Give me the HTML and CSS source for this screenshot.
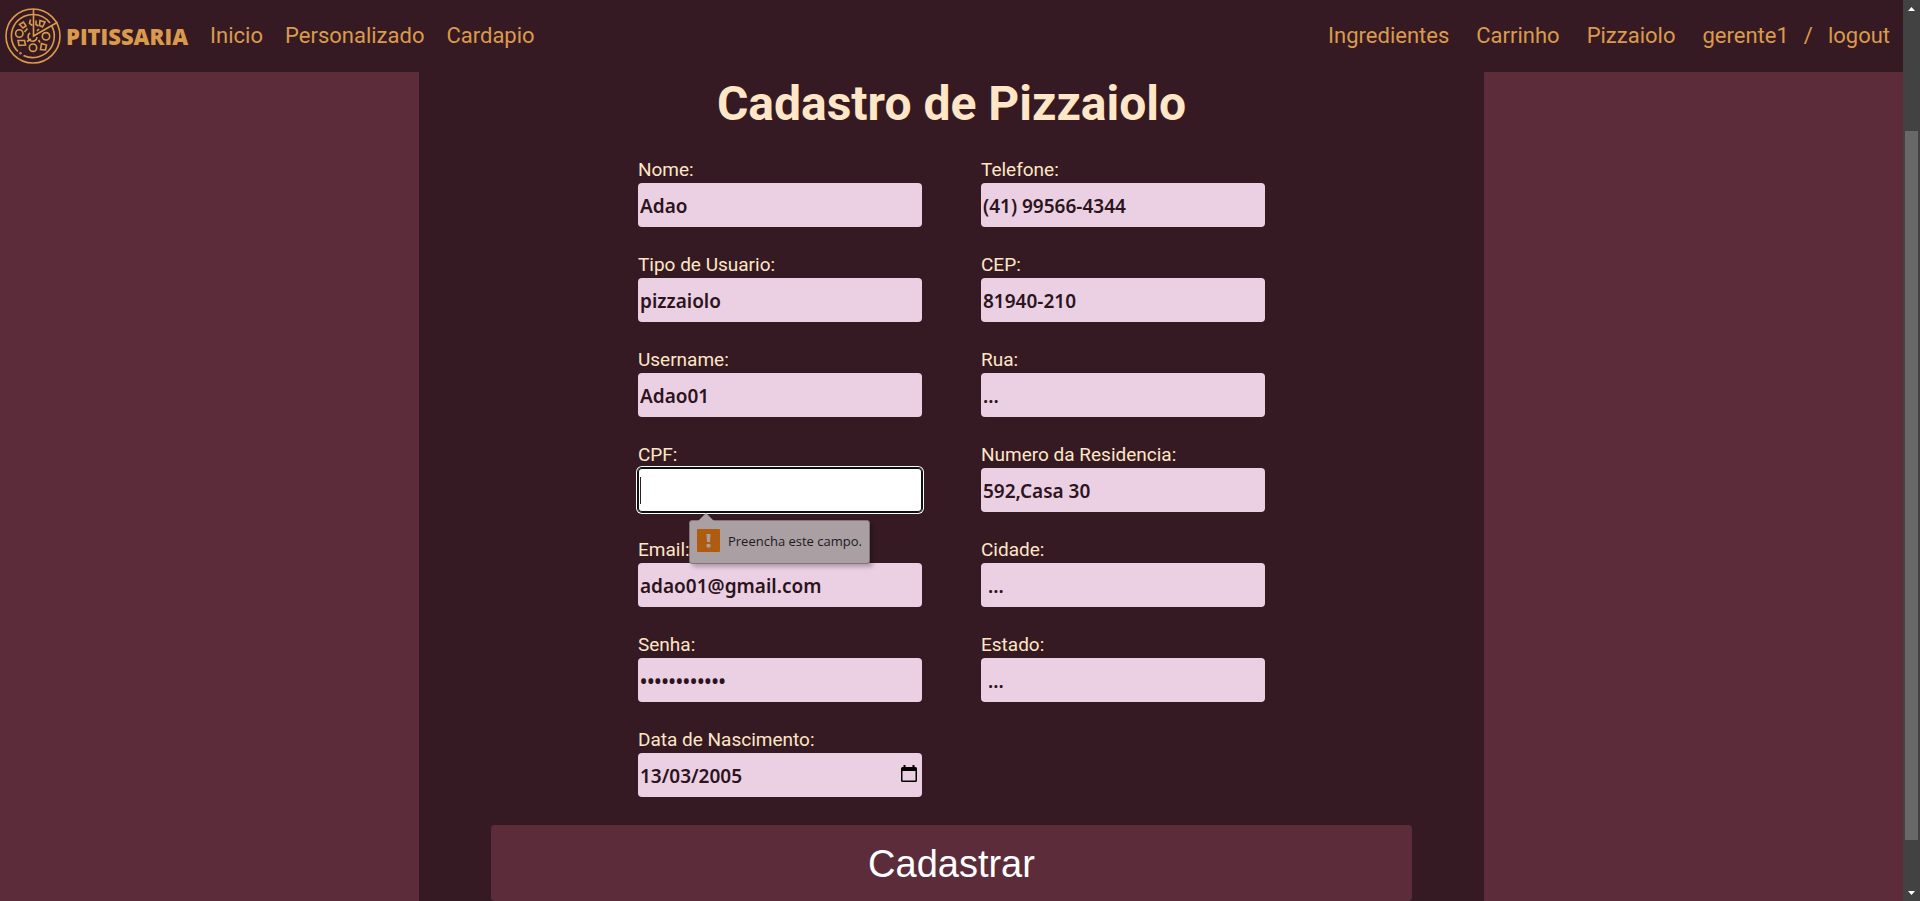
FILE: index.html
```html
<!DOCTYPE html>
<html lang="pt-BR">
<head>
<meta charset="utf-8">
<title>Pitissaria - Cadastro de Pizzaiolo</title>
<link rel="stylesheet" href="styles.css">
</head>
<body>
<div class="page">
  <header class="header">
    <a class="brand" href="#">
      <svg class="brand-logo" viewBox="0 0 56 56" fill="none" stroke="currentColor" stroke-width="1.6" aria-hidden="true">
        <circle cx="28" cy="28" r="27"/>
        <path d="M46.500 17.500A21.500 21.500 0 0 1 18.500 47.500M13 43.500A21.500 21.500 0 0 1 28 6.500A21.500 21.500 0 0 1 45 15"/>
        <path d="M28.500 1v27L52.500 14.300"/>
        <circle cx="14.300" cy="25.500" r="3.700"/>
        <circle cx="41" cy="28.300" r="3.700"/>
        <circle cx="28" cy="39.700" r="3.700"/>
        <path d="M14.500 16.500l4-2.500 2.500 4-3 2zM35 12.500l5 1.500-2.500 5-3-1.500zM13 32.500h6.500l1 4.500-6.500.5zM36.500 35.500l5 1.500-1 5-5-.5z"/>
        <path d="M25.500 11.500l-1 4 3 2M31 12.500v4l2.500 1.500M22.500 20.500l-3 3.500M25 25a4.500 4.500 0 1 0 7 4M22 33.500l4-2.500M33.500 32l1.500 2.500M34 21l-2 2"/>
        <circle cx="15.500" cy="45.300" r=".5"/>
      </svg>
      <span class="brand-name">PITISSARIA</span>
    </a>
    <nav class="nav nav-main">
      <a href="#">Inicio</a><a href="#">Personalizado</a><a href="#">Cardapio</a>
    </nav>
    <nav class="nav nav-user">
      <a href="#">Ingredientes</a><a href="#">Carrinho</a><a href="#">Pizzaiolo</a>
      <span class="session"><a href="#">gerente1</a><span>/</span><a href="#">logout</a></span>
    </nav>
  </header>
  <main class="panel">
    <h1 class="title">Cadastro de Pizzaiolo</h1>
    <form class="form">
      <div class="columns">
        <div class="column">
          <div class="field"><label for="nome">Nome:</label><input id="nome" type="text" value="Adao"></div>
          <div class="field"><label for="tipo">Tipo de Usuario:</label><input id="tipo" type="text" value="pizzaiolo"></div>
          <div class="field"><label for="username">Username:</label><input id="username" type="text" value="Adao01"></div>
          <div class="field">
            <label for="cpf">CPF:</label><input id="cpf" class="is-focused" type="text">
            <div class="hint" role="alert">
              <svg class="hint-icon" viewBox="0 0 23 23" aria-hidden="true"><rect width="23" height="23" rx="1" fill="#b05c0e"/><path d="M9.500 5h4l-.5 8h-3z" fill="#aaa0a4"/><rect x="9.500" y="15" width="4" height="3.500" rx="1" fill="#aaa0a4"/></svg>
              <span>Preencha este campo.</span>
            </div>
          </div>
          <div class="field"><label for="email">Email:</label><input id="email" type="email" value="adao01@gmail.com"></div>
          <div class="field"><label for="senha">Senha:</label><input id="senha" type="password" value="pizzaiolo123"></div>
          <div class="field">
            <label for="nascimento">Data de Nascimento:</label>
            <div class="date">
              <input id="nascimento" type="text" value="13/03/2005">
              <button class="date-button" type="button" aria-label="Abrir calendário">
                <svg viewBox="0 0 16 18" aria-hidden="true"><path d="M2.500 0h2v2h7V0h2v2h1A1.500 1.500 0 0 1 16 3.500v12a1.500 1.500 0 0 1-1.500 1.500h-13A1.500 1.500 0 0 1 0 15.500v-12A1.500 1.500 0 0 1 1.500 2h1zM1.500 6v9.500h13V6z" fill="#000"/></svg>
              </button>
            </div>
          </div>
        </div>
        <div class="column">
          <div class="field"><label for="telefone">Telefone:</label><input id="telefone" type="tel" value="(41) 99566-4344"></div>
          <div class="field"><label for="cep">CEP:</label><input id="cep" type="text" value="81940-210"></div>
          <div class="field"><label for="rua">Rua:</label><input id="rua" type="text" value="..."></div>
          <div class="field"><label for="numero">Numero da Residencia:</label><input id="numero" type="text" value="592,Casa 30"></div>
          <div class="field"><label for="cidade">Cidade:</label><input id="cidade" type="text" value=" ..."></div>
          <div class="field"><label for="estado">Estado:</label><input id="estado" type="text" value=" ..."></div>
        </div>
      </div>
      <button class="submit" type="submit">Cadastrar</button>
    </form>
  </main>
</div>
<div class="scrollbar" aria-hidden="true">
  <svg class="scroll-arrow" viewBox="0 0 17 17"><path d="M5 11l3.500-4L12 11z" fill="#fff"/></svg>
  <div class="scroll-track"><div class="scroll-thumb"></div></div>
  <svg class="scroll-arrow" viewBox="0 0 17 17"><path d="M5 7l3.500 4L12 7z" fill="#fff"/></svg>
</div>
</body>
</html>
```
FILE: styles.css
```css
* { box-sizing: border-box; }

body {
  margin: 0;
  height: 100vh;
  display: flex;
  overflow: hidden;
  background: #5c2c3b;
  font-family: Roboto, "Liberation Sans", sans-serif;
}

.page {
  flex: 1;
  min-width: 0;
  display: flex;
  flex-direction: column;
}

.header {
  height: 72px;
  flex: none;
  display: flex;
  align-items: center;
  padding: 0 13px 0 5px;
  background: #361a23;
  color: #da9a4e;
}

.header a { color: inherit; text-decoration: none; }

.brand { display: flex; align-items: center; gap: 5px; }
.brand-logo { width: 56px; height: 56px; }
.brand-name { font: 800 22px/28px "Open Sans", sans-serif; }

.nav { display: flex; font-size: 22px; line-height: 28px; }
.nav-main { gap: 22px; margin-left: 22px; }
.nav-user { gap: 27px; margin-left: auto; }
.session { display: flex; gap: 15px; }

.panel {
  flex: 1;
  width: 56%;
  margin: 0 auto;
  background: #361a23;
}

.title {
  margin: 0;
  padding-top: 4px;
  text-align: center;
  font-size: 48px;
  line-height: 56px;
  color: #ffe6c6;
}

.form { display: flex; flex-direction: column; padding: 0 72px; }
.columns { display: flex; justify-content: center; gap: 59px; padding-top: 25px; }
.column { width: 284px; display: flex; flex-direction: column; gap: 25px; }
.field { position: relative; display: flex; flex-direction: column; }

label { font-size: 19px; line-height: 26px; color: #ffe6c6; }

input {
  width: 100%;
  height: 44px;
  padding: 1px 2px 0;
  border: 0;
  border-radius: 4px;
  background: #ebd0e3;
  color: #2b141c;
  font: 600 19px/26px "Noto Sans", sans-serif;
}

.is-focused {
  background: #fff linear-gradient(#361a23, #361a23) 2px 9px / 1px 27px no-repeat;
  box-shadow: inset 0 0 0 1px #101010, 0 0 0 1px #101010, 0 0 0 2px #fff;
}

.hint {
  position: absolute;
  z-index: 1;
  top: 78px;
  left: 51px;
  height: 44px;
  display: flex;
  align-items: center;
  gap: 8px;
  padding: 0 7px 3px;
  border: 1px solid #7d7579;
  border-radius: 3px;
  background: #aaa0a4;
  box-shadow: 3px 3px 4px rgba(0, 0, 0, .25);
  color: #201a1c;
  font: 13px/18px "Open Sans", sans-serif;
  white-space: nowrap;
}

.hint::before {
  content: "";
  position: absolute;
  top: -8px;
  left: 8px;
  border: 8px solid transparent;
  border-top: 0;
  border-bottom-color: #aaa0a4;
}

.hint-icon { width: 23px; height: 23px; }

.date { position: relative; }
.date-button {
  position: absolute;
  top: 12px;
  right: 5px;
  padding: 0;
  border: 0;
  background: none;
}
.date-button svg { display: block; width: 16px; height: 18px; }

.submit {
  margin-top: 28px;
  padding: 17px 0 15px;
  border: 0;
  border-radius: 4px;
  background: #5c2c3b;
  color: #fff;
  font: 38px/44px "Liberation Sans", Arial, sans-serif;
}

.scrollbar {
  flex: none;
  width: 17px;
  display: flex;
  flex-direction: column;
  background: #424242;
}
.scroll-arrow { width: 17px; height: 17px; }
.scroll-track { flex: 1; padding: 114px 2px 44px; }
.scroll-thumb { height: 100%; background: #686868; }
```
